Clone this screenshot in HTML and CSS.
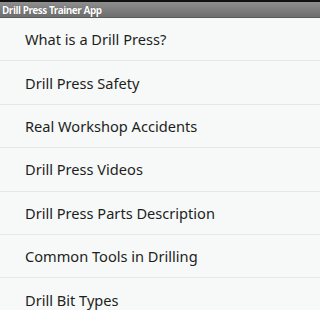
FILE: index.html
```
<!DOCTYPE html>
<html>
<head>
<meta charset="utf-8">
<link rel="stylesheet" href="styles.css">
</head>
<body>
<div class="status"></div>
<div class="titlebar">Drill Press Trainer App</div>
<ul class="menu">
  <li class="item">What is a Drill Press?</li>
  <li class="item">Drill Press Safety</li>
  <li class="item">Real Workshop Accidents</li>
  <li class="item">Drill Press Videos</li>
  <li class="item">Drill Press Parts Description</li>
  <li class="item">Common Tools in Drilling</li>
  <li class="item">Drill Bit Types</li>
</ul>
</body>
</html>
```
FILE: styles.css
```
html, body {
  margin: 0;
  padding: 0;
  background: #f6f9f7;
  overflow: hidden;
}
body {
  font-family: "Noto Sans", "Open Sans", sans-serif;
}
.status {
  height: 2px;
  background: #111;
}
.titlebar {
  height: 16px;
  line-height: 16px;
  padding-left: 2px;
  background: linear-gradient(#8e8e8e, #6e6e6e);
  color: #fff;
  font-family: "Noto Sans", sans-serif;
  font-weight: bold;
  font-size: 10px;
  letter-spacing: -0.45px;
  text-shadow: 0 0 1px #444;
  border-bottom: 1px solid #5a5a5a;
  box-sizing: border-box;
}
.menu {
  list-style: none;
  margin: 0;
  padding: 0;
}
.item {
  height: 43.4px;
  box-sizing: border-box;
  display: flex;
  align-items: center;
  padding-left: 25px;
  font-size: 14.6px;
  color: #1e1e1e;
  border-bottom: 1px solid #e3e9e5;
}
```
